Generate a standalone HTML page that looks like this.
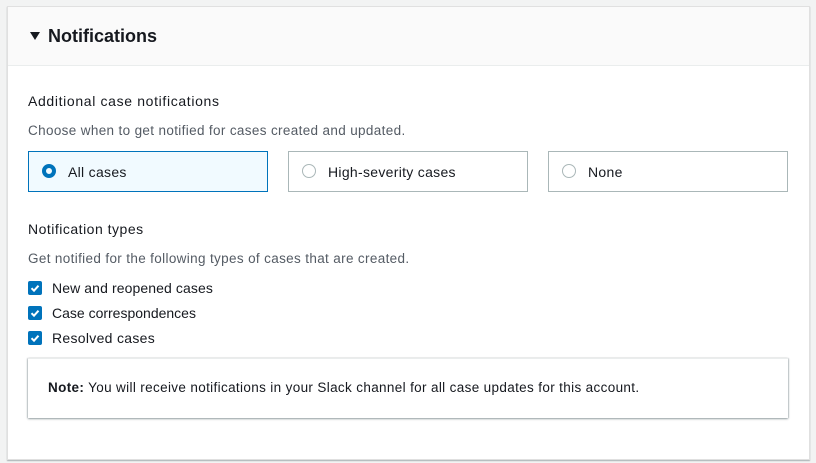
<!DOCTYPE html>
<html><head><style>
body{margin:0;width:816px;height:463px;background:#f2f3f3;font-family:"Liberation Sans",sans-serif;color:#16191f;position:relative;overflow:hidden}
.card{position:absolute;left:7px;top:6px;width:801px;height:452px;background:#fff;border:1px solid #e0e0e0;box-shadow:0 1px 1px rgba(0,28,36,.3)}
.hdr{position:absolute;left:0;top:0;right:0;height:58px;background:#fafafa;border-bottom:1px solid #eaeded}
.hdr span{position:absolute;left:40px;top:19px;font-size:18px;font-weight:bold}
.tri{position:absolute;left:22px;top:25px;width:0;height:0;border-left:5px solid transparent;border-right:5px solid transparent;border-top:8px solid #16191f}
.t{position:absolute;font-size:14px;white-space:nowrap;letter-spacing:.5px}
.d{color:#545b64;font-size:13.5px;letter-spacing:.35px}
.opt{position:absolute;top:151px;width:238px;height:39px;border:1px solid #aab7b8;background:#fff}
.opt.sel{border-color:#0073bb;background:#f1faff}
.opt .r{position:absolute;left:13px;top:12px;width:14px;height:14px;border:1px solid #aab7b8;border-radius:50%;box-sizing:border-box}
.opt.sel .r{border:4px solid #0073bb}
.opt span{position:absolute;left:39px;top:12px;font-size:14px;letter-spacing:.3px}
.cb{position:absolute;left:28px;width:14px;height:14px;background:#0073bb;border-radius:2px}
.cb svg{position:absolute;left:0;top:0}
.note{position:absolute;left:28px;top:358px;width:760px;height:59px;background:#fff;border-top:1px solid #eaeded;box-shadow:0 1px 2px rgba(0,28,36,.4),1px 0 1px rgba(0,28,36,.15),-1px 0 1px rgba(0,28,36,.15)}
</style></head><body>
<div class="card"><div class="hdr"><div class="tri"></div><span>Notifications</span></div></div>
<div class="t" style="left:28px;top:93px;letter-spacing:.65px">Additional case notifications</div>
<div class="t d" style="left:28px;top:123px">Choose when to get notified for cases created and updated.</div>
<div class="opt sel" style="left:28px"><div class="r"></div><span>All cases</span></div>
<div class="opt" style="left:288px"><div class="r"></div><span>High-severity cases</span></div>
<div class="opt" style="left:548px"><div class="r"></div><span>None</span></div>
<div class="t" style="left:28px;top:221px">Notification types</div>
<div class="t d" style="left:28px;top:251px">Get notified for the following types of cases that are created.</div>
<div class="cb" style="top:281px"><svg width="14" height="14"><path d="M3.5 7.2l2.5 2.5 4.5-5" stroke="#fff" stroke-width="2" fill="none"/></svg></div>
<div class="t" style="left:52px;top:280px;letter-spacing:.1px">New and reopened cases</div>
<div class="cb" style="top:306px"><svg width="14" height="14"><path d="M3.5 7.2l2.5 2.5 4.5-5" stroke="#fff" stroke-width="2" fill="none"/></svg></div>
<div class="t" style="left:52px;top:305px;letter-spacing:0">Case correspondences</div>
<div class="cb" style="top:331px"><svg width="14" height="14"><path d="M3.5 7.2l2.5 2.5 4.5-5" stroke="#fff" stroke-width="2" fill="none"/></svg></div>
<div class="t" style="left:52px;top:330px;letter-spacing:.3px">Resolved cases</div>
<div class="note"><div class="t" style="left:20px;top:21px;font-size:13.5px;letter-spacing:.35px"><b>Note:</b> You will receive notifications in your Slack channel for all case updates for this account.</div></div>
</body></html>
